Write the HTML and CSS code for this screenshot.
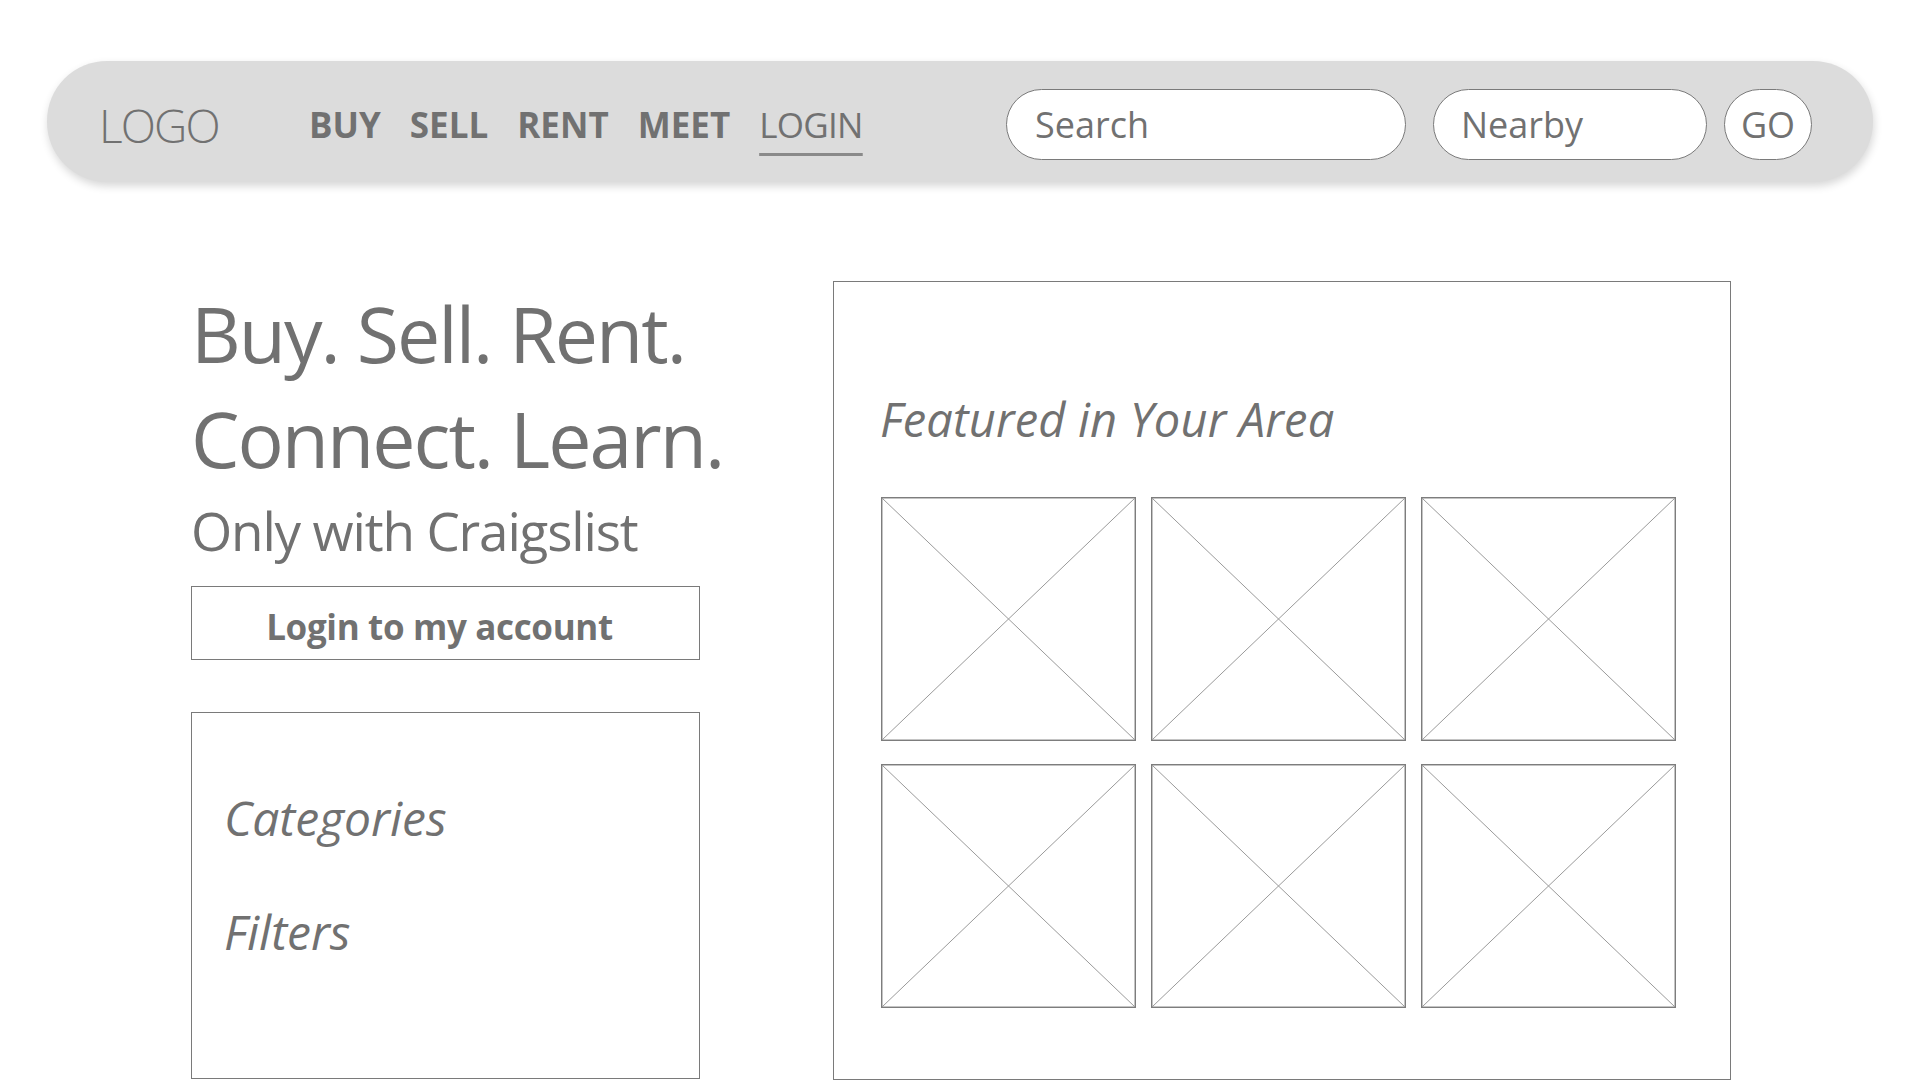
FILE: index.html
```html
<!DOCTYPE html>
<html lang="en">
<head>
<meta charset="utf-8">
<title>Craigslist Wireframe</title>
<link rel="stylesheet" href="styles.css">
</head>
<body>
  <header class="navbar">
    <div class="logo">LOGO</div>
    <nav class="nav">
      <a class="nav-item bold">BUY</a>
      <a class="nav-item bold">SELL</a>
      <a class="nav-item bold">RENT</a>
      <a class="nav-item bold">MEET</a>
      <a class="nav-item active">LOGIN</a>
    </nav>
    <div class="search-group">
      <div class="pill search">Search</div>
      <div class="pill nearby">Nearby</div>
      <div class="pill go">GO</div>
    </div>
  </header>

  <main class="main">
    <section class="left">
      <h1 class="headline">Buy. Sell. Rent.<br>Connect. Learn.</h1>
      <p class="subtitle">Only with Craigslist</p>
      <div class="login-btn">Login to my account</div>
      <div class="filters-box">
        <div class="filter-label">Categories</div>
        <div class="filter-label second">Filters</div>
      </div>
    </section>

    <section class="featured">
      <h2 class="featured-title">Featured in Your Area</h2>
      <div class="grid">
        <div class="thumb"><svg viewBox="0 0 100 100" preserveAspectRatio="none"><line x1="0" y1="0" x2="100" y2="100"/><line x1="100" y1="0" x2="0" y2="100"/></svg></div>
        <div class="thumb"><svg viewBox="0 0 100 100" preserveAspectRatio="none"><line x1="0" y1="0" x2="100" y2="100"/><line x1="100" y1="0" x2="0" y2="100"/></svg></div>
        <div class="thumb"><svg viewBox="0 0 100 100" preserveAspectRatio="none"><line x1="0" y1="0" x2="100" y2="100"/><line x1="100" y1="0" x2="0" y2="100"/></svg></div>
        <div class="thumb"><svg viewBox="0 0 100 100" preserveAspectRatio="none"><line x1="0" y1="0" x2="100" y2="100"/><line x1="100" y1="0" x2="0" y2="100"/></svg></div>
        <div class="thumb"><svg viewBox="0 0 100 100" preserveAspectRatio="none"><line x1="0" y1="0" x2="100" y2="100"/><line x1="100" y1="0" x2="0" y2="100"/></svg></div>
        <div class="thumb"><svg viewBox="0 0 100 100" preserveAspectRatio="none"><line x1="0" y1="0" x2="100" y2="100"/><line x1="100" y1="0" x2="0" y2="100"/></svg></div>
      </div>
    </section>
  </main>
</body>
</html>
```

FILE: styles.css
```css
* { box-sizing: border-box; }

html, body {
  margin: 0;
  padding: 0;
  background: #ffffff;
  overflow: hidden;
}

body {
  font-family: "Open Sans", "Noto Sans", sans-serif;
  color: #717171;
  width: 1920px;
  height: 1080px;
}

/* ---------- Navbar ---------- */
.navbar {
  margin: 61px 47px 0 47px;
  height: 121px;
  background: #dcdcdc;
  border-radius: 60px;
  box-shadow: 1px 4px 8px rgba(0, 0, 0, 0.16);
  display: flex;
  align-items: center;
  padding: 6px 61px 0 52px;
}

.logo {
  width: 210px;
  flex: none;
  font-size: 46px;
  font-weight: 300;
  letter-spacing: -0.04em;
  line-height: 1;
}

.nav {
  display: flex;
  align-items: center;
  gap: 29px;
}

.nav-item {
  font-size: 35px;
  line-height: 1.2;
  color: #717171;
  text-decoration: none;
}

.nav-item.bold { font-weight: 700; }

.nav-item.active {
  font-weight: 400;
  letter-spacing: -0.02em;
  text-decoration: underline;
  text-decoration-thickness: 3px;
  text-underline-offset: 15px;
  text-decoration-color: #8a8a8a;
}

.search-group {
  margin-left: auto;
  display: flex;
  align-items: center;
}

.pill {
  height: 71px;
  background: #ffffff;
  border: 1px solid #7a7a7a;
  border-radius: 36px;
  display: flex;
  align-items: center;
  font-size: 36px;
  color: #717171;
}

.search {
  width: 400px;
  padding-left: 28px;
}

.nearby {
  width: 274px;
  margin-left: 27px;
  padding-left: 27px;
}

.go {
  width: 88px;
  margin-left: 17px;
  justify-content: center;
}

/* ---------- Main ---------- */
.main {
  display: flex;
  align-items: flex-start;
  gap: 133px;
  margin-top: 99px;
  padding-left: 191px;
}

.left {
  width: 509px;
  flex: none;
}

.headline {
  margin: 0;
  font-size: 77px;
  font-weight: 400;
  line-height: 105px;
  letter-spacing: -0.026em;
  white-space: nowrap;
}

.subtitle {
  margin: 4px 0 0 0;
  font-size: 53px;
  line-height: 72px;
  letter-spacing: -0.022em;
  white-space: nowrap;
}

.login-btn {
  margin-top: 19px;
  height: 74px;
  border: 1px solid #7a7a7a;
  display: flex;
  align-items: center;
  justify-content: center;
  padding: 6px 12px 0 0;
  font-size: 35px;
  font-weight: 700;
  letter-spacing: -0.01em;
}

.filters-box {
  margin-top: 52px;
  height: 367px;
  border: 1px solid #7a7a7a;
  padding: 75px 0 0 32px;
}

.filter-label {
  font-size: 48px;
  font-style: italic;
  line-height: 60px;
}

.filter-label.second { margin-top: 54px; }

/* ---------- Featured ---------- */
.featured {
  width: 898px;
  height: 799px;
  flex: none;
  border: 1px solid #7a7a7a;
  padding: 107px 0 0 46px;
}

.featured-title {
  margin: 0;
  font-size: 47px;
  font-weight: 400;
  font-style: italic;
  line-height: 60px;
  letter-spacing: 0.004em;
}

.grid {
  margin-top: 48px;
  padding-left: 1px;
  display: grid;
  grid-template-columns: repeat(3, 255px);
  grid-auto-rows: 244px;
  column-gap: 15px;
  row-gap: 23px;
}

.thumb {
  border: 1px solid #7d7d7d;
  box-shadow: inset 0 0 0 1px #c4c4c4;
  background: #ffffff;
}

.thumb svg {
  display: block;
  width: 100%;
  height: 100%;
}

.thumb line {
  stroke: #9a9a9a;
  stroke-width: 1;
  vector-effect: non-scaling-stroke;
}
```
